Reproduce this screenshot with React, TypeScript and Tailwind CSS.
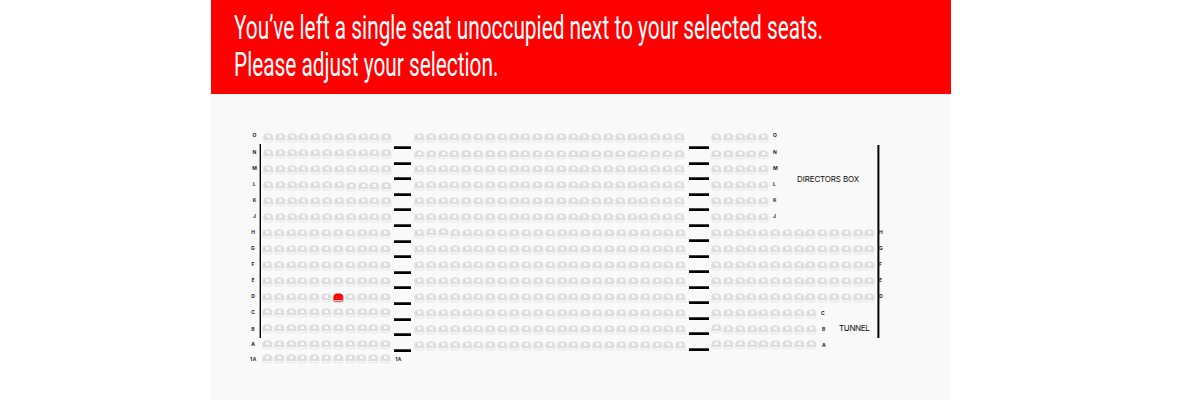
import { clsx } from "clsx";

type Row = {
  id: string;
  seats: number;
  className: string;
  selected?: number;
  raised?: number[];
  lowered?: number[];
};

const UPPER = "h-4 pl-[2px] gap-[0.84px]";
const MIDDLE = "h-4 pl-px gap-[0.82px]";

const LEFT_ROWS: Row[] = [
  { id: "O", seats: 11, className: UPPER },
  { id: "N", seats: 11, className: UPPER },
  { id: "M", seats: 11, className: UPPER },
  { id: "L", seats: 11, className: UPPER, lowered: [7, 8, 9, 10] },
  { id: "K", seats: 11, className: UPPER },
  { id: "J", seats: 11, className: UPPER },
  { id: "H", seats: 11, className: MIDDLE },
  { id: "G", seats: 11, className: MIDDLE },
  { id: "F", seats: 11, className: MIDDLE },
  { id: "E", seats: 11, className: MIDDLE },
  { id: "D", seats: 11, className: "h-[15px] pl-px gap-[0.82px]", selected: 6 },
  { id: "C", seats: 11, className: MIDDLE },
  { id: "B", seats: 11, className: MIDDLE },
  { id: "A", seats: 11, className: "h-[14px] pl-px gap-[0.82px]" },
  { id: "1A", seats: 11, className: "h-4 pl-px gap-[0.8px]" },
];

const CENTRE_ROWS: Row[] = [
  { id: "O", seats: 23, className: "h-[17px] gap-[0.82px]" },
  { id: "N", seats: 23, className: "h-[15px] gap-[0.82px]" },
  { id: "M", seats: 23, className: "h-4 gap-[0.82px]" },
  { id: "L", seats: 23, className: "h-4 gap-[0.82px]" },
  { id: "K", seats: 23, className: "h-4 gap-[0.82px]" },
  { id: "J", seats: 23, className: "h-4 gap-[0.82px]" },
  { id: "H", seats: 23, className: "h-4 gap-[0.88px]", raised: [1, 2] },
  { id: "G", seats: 23, className: "h-4 gap-[0.88px]" },
  { id: "F", seats: 23, className: "h-4 gap-[0.88px]" },
  { id: "E", seats: 23, className: "h-4 gap-[0.88px]" },
  { id: "D", seats: 23, className: "h-4 gap-[0.88px]" },
  { id: "C", seats: 23, className: "h-4 gap-[0.88px]" },
  { id: "B", seats: 23, className: "h-4 gap-[0.88px]" },
  { id: "A", seats: 23, className: "h-4 gap-[0.88px]" },
];

const RIGHT_UPPER: Row[] = [
  { id: "O", seats: 5, className: "h-[17px] gap-[0.78px]" },
  { id: "N", seats: 5, className: "h-[15px] gap-[0.78px]" },
  { id: "M", seats: 5, className: "h-4 gap-[0.78px]" },
  { id: "L", seats: 5, className: "h-4 gap-[0.78px]" },
  { id: "K", seats: 5, className: "h-4 gap-[0.78px]" },
  { id: "J", seats: 5, className: "h-4 gap-[0.78px]" },
];

const RIGHT_MIDDLE: Row[] = ["H", "G", "F", "E", "D"].map((id) => ({
  id,
  seats: 14,
  className: "h-4 gap-[0.8px]",
}));

const RIGHT_LOWER: Row[] = [
  { id: "C", seats: 9, className: "h-4 gap-[0.87px]" },
  { id: "B", seats: 9, className: "h-[15px] gap-[0.87px]", raised: [0] },
  { id: "A", seats: 9, className: "h-4 gap-[0.87px]" },
];

function Seat({ selected, shift }: { selected?: boolean; shift?: string }) {
  return (
    <svg
      viewBox="0 0 11 10"
      className={clsx(
        "w-[11px] h-[10px] shrink-0",
        shift,
        selected ? "text-[#ff0000]" : "text-[#dddddd]"
      )}
    >
      <rect x="0" y="1.4" width="10.6" height="7.8" rx="2.4" fill="currentColor" opacity="0.6" />
      <path d="M1 7V3Q1 0.5 3.4 0.5H7.2Q9.6 0.5 9.6 3V7Z" fill="currentColor" />
      <rect x="1.6" y="7" width="7.4" height="1" fill="#fff" opacity="0.75" />
      {selected ? (
        <path d="M3 3h1v1H3zM6.5 3h1v1h-1zM3 5h1v1H3zM5 5h1v1H5zM7 5h1v1H7z" fill="#fff" opacity="0.3" />
      ) : (
        <path d="M4 2H5L5.5 2.4L6 2H7V3L6.6 3.5L7 4V5H6L5.5 4.6L5 5H4V4L4.4 3.5L4 3Z" fill="#fff" opacity="0.9" />
      )}
    </svg>
  );
}

function SeatRows({ rows }: { rows: Row[] }) {
  return (
    <div className="flex flex-col">
      {rows.map((row) => (
        <div key={row.id} className={clsx("flex items-start", row.className)}>
          {Array.from({ length: row.seats }).map((_, i) => (
            <Seat
              key={i}
              selected={row.selected === i}
              shift={
                row.raised?.includes(i)
                  ? "-mt-px"
                  : row.lowered?.includes(i)
                    ? "mt-px"
                    : undefined
              }
            />
          ))}
        </div>
      ))}
    </div>
  );
}

function Label({ text, className = "h-4" }: { text: string; className?: string }) {
  return (
    <div className={clsx("flex items-center text-[5px] font-bold leading-none text-[#222]", className)}>
      {text}
    </div>
  );
}

function Aisle({ className }: { className: string }) {
  return (
    <div className={clsx("flex flex-col shrink-0", className)}>
      {Array.from({ length: 14 }).map((_, i) => (
        <div key={i} className="h-[3px] shrink-0 border-t border-[#444] bg-black" />
      ))}
    </div>
  );
}

export default function App() {
  return (
    <div className="h-[400px] w-[1200px] overflow-hidden bg-white pl-[211px] font-['Inter',sans-serif]">
      <div className="flex h-full w-[740px] flex-col bg-[#f9f9f9]">
        <div className="h-[94px] shrink-0 bg-[#ff0000] pl-[23px] pt-[9px] font-['Roboto',sans-serif] text-[34px] leading-[37px] text-white">
          <p className="w-max origin-left scale-x-[0.6125] whitespace-nowrap">
            You’ve left a single seat unoccupied next to your selected seats.
          </p>
          <p className="w-max origin-left scale-x-[0.612] whitespace-nowrap">
            Please adjust your selection.
          </p>
        </div>

        <div className="flex items-start pt-[33px]">
          <div className="w-12 shrink-0">
            {["O", "N", "M", "L", "K", "J"].map((l) => (
              <Label
                key={l}
                text={l}
                className={clsx("w-[87px] justify-center", l === "O" ? "h-[17px]" : "h-4")}
              />
            ))}
            {["H", "G", "F", "E", "D"].map((l) => (
              <Label key={l} text={l} className="h-4 w-[84px] justify-center" />
            ))}
            <Label text="C" className="h-[17px] w-[84px] justify-center" />
            <Label text="B" className="h-4 w-[84px] justify-center" />
            <Label text="A" className="h-[15px] w-[84px] justify-center" />
            <Label text="1A" className="h-[14px] w-[84px] justify-center font-['Open_Sans',sans-serif]" />
          </div>
          <div className="mt-[17px] h-[194px] w-[2px] shrink-0 border-l border-[#999] bg-black" />

          <div className="w-[133px] shrink-0 pt-[6px]">
            <SeatRows rows={LEFT_ROWS} />
          </div>

          <div className="w-[20px] shrink-0">
            <Aisle className="mt-[19px] w-[17px] gap-[12.6px]" />
            <Label text="1A" className="mt-px h-[14px] pl-px font-['Open_Sans',sans-serif]" />
          </div>

          <div className="w-[275px] shrink-0 pt-[6px]">
            <SeatRows rows={CENTRE_ROWS} />
          </div>

          <Aisle className="mt-[19px] w-5 gap-[12.5px]" />

          <div className="w-[168px] shrink-0 pl-[2px] pt-[6px]">
            <div className="flex h-24">
              <SeatRows rows={RIGHT_UPPER} />
              <div className="-mt-[6px] ml-[4px] w-[24px] shrink-0">
                {["O", "N", "M", "L", "K", "J"].map((l) => (
                  <Label key={l} text={l} className={l === "O" ? "h-[17px]" : "h-4"} />
                ))}
              </div>
              <span className="mt-[41px] whitespace-nowrap text-[8px] leading-[10px] tracking-[-0.14px] text-[#111]">
                DIRECTORS BOX
              </span>
            </div>
            <SeatRows rows={RIGHT_MIDDLE} />
            <div className="flex">
              <SeatRows rows={RIGHT_LOWER} />
              <div className="-mt-[4px] ml-[4px] w-[18px] shrink-0">
                <Label text="C" />
                <Label text="B" className="h-4 pl-px" />
                <Label text="A" className="h-4 pl-px" />
              </div>
              <span className="mt-[14px] text-[8px] leading-[10px] tracking-[-0.3px] text-[#111]">
                TUNNEL
              </span>
            </div>
          </div>

          <div className="mt-[18px] h-[193px] w-[3px] shrink-0 border-x border-l-[#666] border-r-[#999] bg-black" />
          <div className="-ml-px pt-[97px]">
            {["H", "G", "F", "E", "D"].map((l) => (
              <Label key={l} text={l} />
            ))}
          </div>
        </div>
      </div>
    </div>
  );
}
